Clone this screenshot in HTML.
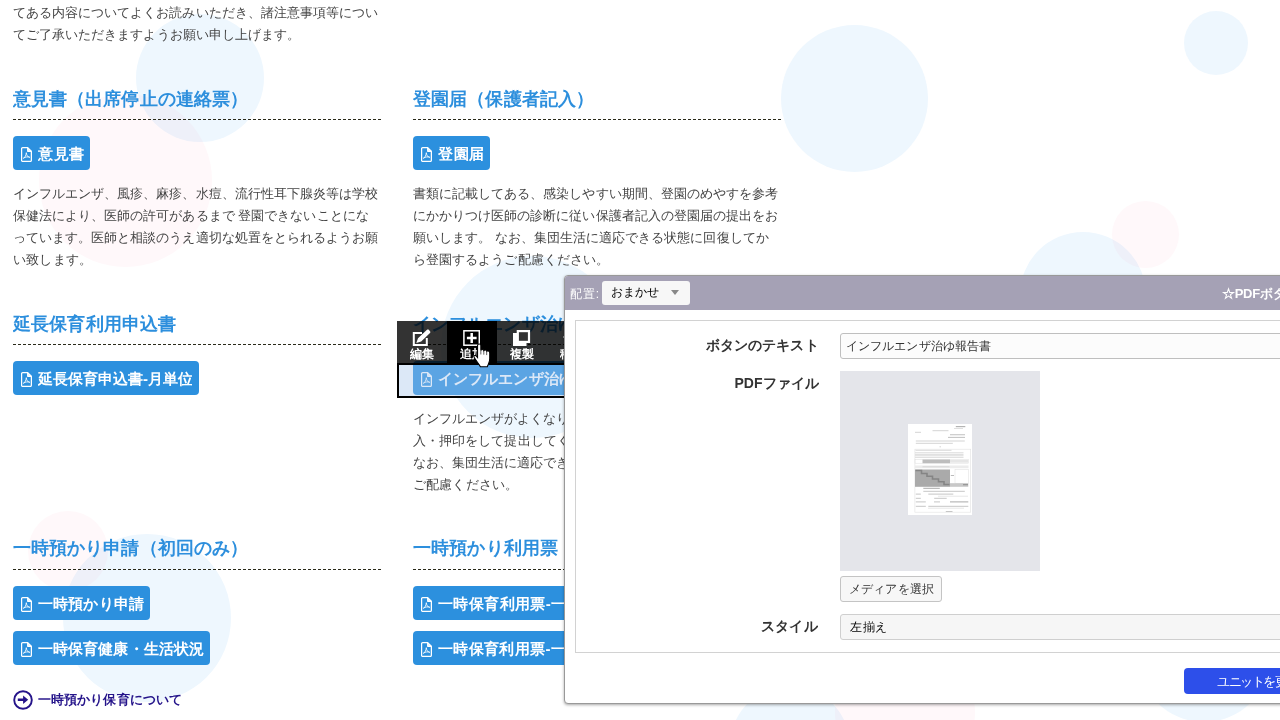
<!DOCTYPE html>
<html lang="ja">
<head>
<meta charset="utf-8">
<title>PDF</title>
<style>
*{box-sizing:border-box;margin:0;padding:0}
html,body{width:1280px;height:720px;overflow:hidden;background:#fff}
body{position:relative;font-family:"Liberation Sans",sans-serif;color:#444}
div,span{white-space:nowrap}
.c{position:absolute;border-radius:50%}
.cb{background:#eef7fe}
.cp{background:#fff8fa}
.mix{mix-blend-mode:multiply}
.j{overflow:hidden;text-align:justify;text-align-last:justify;white-space:nowrap}
.l{position:absolute;height:22px;line-height:22px;font-size:13px;color:#444}
.h{position:absolute;height:26px;line-height:26px;font-size:18px;font-weight:bold;color:#2d8fdd}
.d{position:absolute;height:0;border-top:1px dashed #2a2a1a}
.b{position:absolute;height:34px;background:#2c90de;border-radius:4px;overflow:hidden}
.b span{position:absolute;left:25px;top:1px;height:34px;line-height:34px;font-size:15px;font-weight:bold;color:#fff}
.b svg{position:absolute;left:8px;top:11px}
#tb{position:absolute;left:397px;top:321px;width:300px;height:42px;background:rgba(0,0,0,.8)}
.ti{position:absolute;top:0;width:50px;height:42px}
.ti span{position:absolute;left:12.5px;width:24.5px;top:26px;height:14px;line-height:14px;font-size:12px;font-weight:bold;color:#fff;overflow:hidden;text-align:justify;text-align-last:justify}
.ti svg{position:absolute}
#unit{position:absolute;left:397px;top:363px;width:400px;height:35px;border:2px solid #000;background:rgba(166,197,235,.394)}
#dlg{position:absolute;left:564px;top:275px;width:760px;height:429px;background:#fff;border:1px solid #999;border-radius:4px;box-shadow:0 1px 3px rgba(0,0,0,.35);overflow:hidden}
#dh{position:absolute;left:0;top:0;width:760px;height:34px;background:#a5a1b5}
#dh .lb{position:absolute;left:5px;top:10px;height:16px;line-height:16px;font-size:12px;color:#fff;width:29px}
#sel{position:absolute;left:37px;top:5px;width:88px;height:24px;background:#f7f7f7;border-radius:3px}
#sel span{position:absolute;left:9px;top:3px;height:17px;line-height:17px;font-size:12px;color:#000;width:48px}
#sel i{position:absolute;left:69px;top:9px;width:0;height:0;border-left:4.5px solid transparent;border-right:4.5px solid transparent;border-top:5px solid #888}
#ttl{position:absolute;left:657px;top:9px;height:18px;line-height:18px;font-size:13px;font-weight:bold;letter-spacing:-.3px;color:#fff}
#box{position:absolute;left:10px;top:44px;width:760px;height:333px;border:1px solid #d2d2d2}
.fl{position:absolute;height:20px;line-height:20px;font-size:14px;font-weight:bold;color:#333}
.inp{position:absolute;border:1px solid #bfbfbf;border-radius:3px;font-size:12px;color:#333}
.inp span{position:absolute;top:0}
</style>
</head>
<body>
<div class="c cp" style="left:39px;top:94px;width:173px;height:173px"></div>
<div class="c cb mix" style="left:136px;top:14px;width:128px;height:128px"></div>
<div class="c cb" style="left:781px;top:25px;width:147px;height:147px"></div>
<div class="c cb" style="left:1184px;top:11px;width:64px;height:64px"></div>
<div class="c cp" style="left:1111.5px;top:201px;width:67px;height:67px"></div>
<div class="c cb mix" style="left:1020px;top:232px;width:126px;height:126px"></div>
<div class="c cb" style="left:441px;top:256px;width:182px;height:182px"></div>
<div class="c cp" style="left:28px;top:510.5px;width:80px;height:80px"></div>
<div class="c cb mix" style="left:63px;top:534px;width:168px;height:168px"></div>
<div class="c cp" style="left:835px;top:642px;width:140px;height:140px"></div>
<div class="c cb mix" style="left:730px;top:686px;width:120px;height:120px"></div>
<div class="c cb" style="left:1138px;top:590px;width:132px;height:132px"></div>
<div class="l j" style="left:13px;top:2px;width:365px">てある内容についてよくお読みいただき、諸注意事項等につい</div>
<div class="l j" style="left:13px;top:24px;width:287px">てご了承いただきますようお願い申し上げます。</div>
<div class="h j" style="left:13px;top:86px;width:235px">意見書（出席停止の連絡票）</div>
<div class="d" style="left:13px;top:119px;width:368px"></div>
<div class="b" style="left:13px;top:136px;width:77px"><svg width="11" height="15" viewBox="0 0 11 15" fill="none" stroke="#fff" stroke-width="1.25" stroke-linejoin="round"><path d="M1.6.65h5.100l3.650 3.650v9.100a1 1 0 0 1-1 1H1.600a1 1 0 0 1-1-1V1.650a1 1 0 0 1 1-1z"/><path d="M6.700.8v3.500h3.500" fill="#fff" fill-opacity=".85"/><path d="M2.400 11.800c1.500-1.300 2.700-3.500 2.900-6.100c.2 2.500 1.500 4.300 3.500 5M2.300 10.900c2-.9 4.300-1.200 6.500-.9" stroke-width=".85"/></svg><span class="j" style="width:46px">意見書</span></div>
<div class="l j" style="left:13px;top:183px;width:365px">インフルエンザ、風疹、麻疹、水痘、流行性耳下腺炎等は学校</div>
<div class="l j" style="left:13px;top:205px;width:355.64px">保健法により、医師の許可があるまで 登園できないことにな</div>
<div class="l j" style="left:13px;top:227px;width:365px">っています。医師と相談のうえ適切な処置をとられるようお願</div>
<div class="l j" style="left:13px;top:249px;width:79px">い致します。</div>
<div class="h j" style="left:13px;top:310.7px;width:163px">延長保育利用申込書</div>
<div class="d" style="left:13px;top:344px;width:368px"></div>
<div class="b" style="left:13px;top:361px;width:186px"><svg width="11" height="15" viewBox="0 0 11 15" fill="none" stroke="#fff" stroke-width="1.25" stroke-linejoin="round"><path d="M1.6.65h5.100l3.650 3.650v9.100a1 1 0 0 1-1 1H1.600a1 1 0 0 1-1-1V1.650a1 1 0 0 1 1-1z"/><path d="M6.700.8v3.500h3.500" fill="#fff" fill-opacity=".85"/><path d="M2.400 11.800c1.500-1.300 2.700-3.500 2.900-6.100c.2 2.500 1.500 4.300 3.500 5M2.300 10.900c2-.9 4.300-1.200 6.500-.9" stroke-width=".85"/></svg><span class="j" style="width:154px">延長保育申込書-月単位</span></div>
<div class="h j" style="left:13px;top:535.3px;width:235px">一時預かり申請（初回のみ）</div>
<div class="d" style="left:13px;top:569px;width:368px"></div>
<div class="b" style="left:13px;top:586px;width:137px"><svg width="11" height="15" viewBox="0 0 11 15" fill="none" stroke="#fff" stroke-width="1.25" stroke-linejoin="round"><path d="M1.6.65h5.100l3.650 3.650v9.100a1 1 0 0 1-1 1H1.600a1 1 0 0 1-1-1V1.650a1 1 0 0 1 1-1z"/><path d="M6.700.8v3.500h3.500" fill="#fff" fill-opacity=".85"/><path d="M2.400 11.800c1.500-1.300 2.700-3.500 2.900-6.100c.2 2.500 1.500 4.300 3.500 5M2.300 10.900c2-.9 4.300-1.200 6.500-.9" stroke-width=".85"/></svg><span class="j" style="width:106px">一時預かり申請</span></div>
<div class="b" style="left:13px;top:631px;width:197px"><svg width="11" height="15" viewBox="0 0 11 15" fill="none" stroke="#fff" stroke-width="1.25" stroke-linejoin="round"><path d="M1.6.65h5.100l3.650 3.650v9.100a1 1 0 0 1-1 1H1.600a1 1 0 0 1-1-1V1.650a1 1 0 0 1 1-1z"/><path d="M6.700.8v3.500h3.500" fill="#fff" fill-opacity=".85"/><path d="M2.400 11.800c1.500-1.300 2.700-3.500 2.900-6.100c.2 2.500 1.500 4.300 3.500 5M2.300 10.900c2-.9 4.300-1.200 6.500-.9" stroke-width=".85"/></svg><span class="j" style="width:166px">一時保育健康・生活状況</span></div>
<svg style="position:absolute;left:13px;top:690px" width="20" height="20" viewBox="0 0 20 20"><circle cx="10" cy="10" r="8.800" fill="none" stroke="#25148a" stroke-width="1.900"/><path d="M4.800 8.400h5.300V5.500L15.200 9.700 10.100 13.900V11H4.800z" fill="#25148a"/></svg>
<div class="l j" style="left:38px;top:688.5px;width:144px;font-weight:bold;color:#25148a">一時預かり保育について</div>
<div class="h j" style="left:413px;top:86px;width:181px">登園届（保護者記入）</div>
<div class="d" style="left:413px;top:119px;width:368px"></div>
<div class="b" style="left:413px;top:136px;width:77px"><svg width="11" height="15" viewBox="0 0 11 15" fill="none" stroke="#fff" stroke-width="1.25" stroke-linejoin="round"><path d="M1.6.65h5.100l3.650 3.650v9.100a1 1 0 0 1-1 1H1.600a1 1 0 0 1-1-1V1.650a1 1 0 0 1 1-1z"/><path d="M6.700.8v3.500h3.500" fill="#fff" fill-opacity=".85"/><path d="M2.400 11.800c1.500-1.300 2.700-3.500 2.900-6.100c.2 2.500 1.500 4.300 3.500 5M2.300 10.900c2-.9 4.300-1.200 6.500-.9" stroke-width=".85"/></svg><span class="j" style="width:46px">登園届</span></div>
<div class="l j" style="left:413px;top:183px;width:365px">書類に記載してある、感染しやすい期間、登園のめやすを参考</div>
<div class="l j" style="left:413px;top:205px;width:365px">にかかりつけ医師の診断に従い保護者記入の登園届の提出をお</div>
<div class="l j" style="left:413px;top:227px;width:355.64px">願いします。 なお、集団生活に適応できる状態に回復してか</div>
<div class="l j" style="left:413px;top:249px;width:196px">ら登園するようご配慮ください。</div>
<div class="h j" style="left:413px;top:310.7px;width:217px">インフルエンザ治ゆ報告書</div>
<div class="d" style="left:413px;top:344px;width:368px"></div>
<div class="b" style="left:413px;top:361px;width:210px"><svg width="11" height="15" viewBox="0 0 11 15" fill="none" stroke="#fff" stroke-width="1.25" stroke-linejoin="round"><path d="M1.6.65h5.100l3.650 3.650v9.100a1 1 0 0 1-1 1H1.600a1 1 0 0 1-1-1V1.650a1 1 0 0 1 1-1z"/><path d="M6.700.8v3.500h3.500" fill="#fff" fill-opacity=".85"/><path d="M2.400 11.800c1.500-1.300 2.700-3.500 2.900-6.100c.2 2.500 1.500 4.300 3.500 5M2.300 10.900c2-.9 4.300-1.200 6.500-.9" stroke-width=".85"/></svg><span class="j" style="width:181px">インフルエンザ治ゆ報告書</span></div>
<div class="l j" style="left:413px;top:408px;width:339px">インフルエンザがよくなりましたら、医師の診断に従い記</div>
<div class="l j" style="left:413px;top:430px;width:209px">入・押印をして提出してください。</div>
<div class="l j" style="left:413px;top:452px;width:365px">なお、集団生活に適応できる状態に回復してから登園するよう</div>
<div class="l j" style="left:413px;top:474px;width:105px">ご配慮ください。</div>
<div class="h j" style="left:413px;top:535.3px;width:145px">一時預かり利用票</div>
<div class="d" style="left:413px;top:569px;width:368px"></div>
<div class="b" style="left:413px;top:586px;width:230px"><svg width="11" height="15" viewBox="0 0 11 15" fill="none" stroke="#fff" stroke-width="1.25" stroke-linejoin="round"><path d="M1.6.65h5.100l3.650 3.650v9.100a1 1 0 0 1-1 1H1.600a1 1 0 0 1-1-1V1.650a1 1 0 0 1 1-1z"/><path d="M6.700.8v3.500h3.500" fill="#fff" fill-opacity=".85"/><path d="M2.400 11.800c1.500-1.300 2.700-3.500 2.900-6.100c.2 2.500 1.500 4.300 3.500 5M2.300 10.900c2-.9 4.300-1.200 6.500-.9" stroke-width=".85"/></svg><span class="j" style="width:143.5px">一時保育利用票-一日</span></div>
<div class="b" style="left:413px;top:631px;width:230px"><svg width="11" height="15" viewBox="0 0 11 15" fill="none" stroke="#fff" stroke-width="1.25" stroke-linejoin="round"><path d="M1.6.65h5.100l3.650 3.650v9.100a1 1 0 0 1-1 1H1.600a1 1 0 0 1-1-1V1.650a1 1 0 0 1 1-1z"/><path d="M6.700.8v3.500h3.500" fill="#fff" fill-opacity=".85"/><path d="M2.400 11.800c1.500-1.300 2.700-3.500 2.900-6.100c.2 2.500 1.500 4.300 3.500 5M2.300 10.900c2-.9 4.300-1.200 6.500-.9" stroke-width=".85"/></svg><span class="j" style="width:158.5px">一時保育利用票-一時間</span></div>
<div id="unit"></div>
<div id="tb"><div class="ti" style="left:0"><svg style="left:15px;top:8px" width="20" height="18" viewBox="0 0 20 18"><path d="M10 4H1.800v12h13V9" fill="none" stroke="#fff" stroke-width="2"/><path d="M4.300 14l1.700-4.800L15 .8c.5-.5 1.300-.5 1.800 0l1.200 1.400c.5.500.5 1.200 0 1.700L9.200 12.500z" fill="#fff"/></svg><span>編集</span></div><div class="ti" style="left:50px;background:#000"><svg style="left:16px;top:9px" width="17" height="16" viewBox="0 0 17 16"><rect x=".9" y=".8" width="15.400" height="14.400" fill="none" stroke="#fff" stroke-width="1.500"/><path d="M8.700 3.100v9.800M3.900 8h9.700" stroke="#fff" stroke-width="2.500"/></svg><span>追加</span></div><div class="ti" style="left:100px"><svg style="left:16px;top:9px" width="18" height="16" viewBox="0 0 18 16"><rect x="0" y="3" width="13.500" height="13" fill="#fff"/><rect x="4.800" y="1.100" width="11.200" height="10.800" fill="#333" stroke="#fff" stroke-width="2.200"/></svg><span>複製</span></div><div class="ti" style="left:150px"><svg style="left:16px;top:8px" width="16" height="16" viewBox="0 0 16 16"><path d="M8 0l3 3.500H9v3.500h3.500V5L16 8l-3.500 3V9H9v3.500h2L8 16l-3-3.500h2V9H3.500v2L0 8l3.500-3v2H7V3.500H5z" fill="#fff"/></svg><span>移動</span></div></div>
<svg style="position:absolute;left:473px;top:343px" width="18" height="25" viewBox="0 0 17 24" preserveAspectRatio="none"><path d="M4.300 2.300C4.300.5 7.400.5 7.400 2.300V7.200C8 6 9.800 6 10.200 7.400C10.800 6.400 12.600 6.600 12.900 8C13.600 7.300 15.800 7.600 15.800 9.500V15C15.800 18.500 14.500 20 13.500 22.800H7C6 20.500 3.500 18 1.200 14C.3 12.400 1.800 11.200 3 12.500L4.300 14Z" fill="#fff" stroke="#000" stroke-width="1"/><path d="M10.200 7.400v3.800M12.900 8v3.600M7.400 7v4" stroke="#444" stroke-width=".8"/></svg>
<div id="dlg"><div id="dh"><span class="lb j">配置:</span><div id="sel"><span class="j">おまかせ</span><i></i></div><span id="ttl">☆PDFボタン</span></div><div id="box"></div><div class="fl j" style="left:141px;width:112.5px;top:59px">ボタンのテキスト</div><div class="fl j" style="left:169.5px;width:84px;top:97px">PDFファイル</div><div class="fl j" style="left:196px;width:56.5px;top:340px">スタイル</div><div class="inp" style="left:275px;top:57px;width:500px;height:26px;background:#fcfcfc"><span class="j" style="left:5px;height:24px;line-height:24px;width:145px">インフルエンザ治ゆ報告書</span></div><div style="position:absolute;left:275px;top:95px;width:200px;height:200px;background:#e4e5ea"></div><svg style="position:absolute;left:343px;top:148px" width="64" height="91" viewBox="0 0 64 91"><rect width="64" height="91" fill="#fff"/><g fill="#d4d4d4"><rect x="24.500" y="6.200" width="16" height="1"/><rect x="7" y="7.800" width="6" height="1"/><rect x="7.800" y="16.500" width="49" height="1"/><rect x="7.800" y="18.800" width="37" height="1"/><rect x="31.500" y="22.300" width="1.500" height="1"/><rect x="7.500" y="25.800" width="36" height=".9"/><rect x="7" y="28.400" width="48.500" height=".8"/><rect x="7" y="29.900" width="48.500" height=".8"/><rect x="7" y="31.400" width="48.500" height=".8"/><rect x="7" y="32.900" width="48.500" height=".8"/></g><rect x="47.800" y="2" width="9.500" height="1.200" fill="#b4b4b4"/><rect x="46" y="4" width="9" height=".8" fill="#d8d8d8"/><rect x="42" y="10.400" width="15" height=".8" fill="#b0b0b0"/><rect x="40" y="12.900" width="17" height=".8" fill="#b0b0b0"/><rect x="6.900" y="25.200" width="55.800" height="63" fill="none" stroke="#e2e2e2" stroke-width=".6"/><rect x="7" y="35.500" width="53.500" height="3.700" fill="none" stroke="#ddd" stroke-width=".5"/><rect x="14.500" y="35.500" width="27.500" height="3.700" fill="#bdbdbd"/><rect x="42" y="36" width="18" height="2.700" fill="#e6e6e6"/><rect x="7" y="41.500" width="53.500" height="2.700" fill="#ececec"/><rect x="14.500" y="42.300" width="27" height="1" fill="#d6d6d6"/><rect x="7" y="45.500" width="35" height="17.300" fill="#aaa"/><path d="M7.500 46.500h6v3h5.500v2.700h5.500v2.800h6v2.800h5.500v2.700h5.500" fill="none" stroke="#858585" stroke-width="1.600"/><rect x="47" y="45.700" width="13.300" height="13.500" fill="#fff" stroke="#dedede" stroke-width=".5"/><rect x="42.800" y="51" width="3.200" height="1" fill="#bbb"/><rect x="42" y="59.200" width="18.300" height="3.600" fill="#c8c8c8"/><rect x="55" y="60" width="5" height="1.300" fill="#999"/><g fill="#c6c6c6"><rect x="15.300" y="63.800" width="16.500" height="1" fill="#aaa"/><rect x="15.300" y="66.800" width="41.500" height="1"/><rect x="7.800" y="69.600" width="5" height="1"/><rect x="20.300" y="69.600" width="25" height="1"/><rect x="30" y="71.800" width="30" height=".7" fill="#ddd"/><rect x="7.800" y="73.800" width="5" height="1"/><rect x="26.200" y="73.800" width="12.500" height="1"/><rect x="7.800" y="77.400" width="10" height="1"/><rect x="26" y="77.400" width="6" height="1"/><rect x="42" y="77.400" width="18.300" height="1" fill="#aaa"/><rect x="7.800" y="81.800" width="10" height="1"/><rect x="20.300" y="81.800" width="40" height="1"/><rect x="20" y="83.800" width="36" height=".7" fill="#ddd"/><rect x="37.800" y="87" width="6.700" height="1"/></g></svg><div class="inp" style="left:275px;top:300px;width:102px;height:26px;background:#f7f7f7;border-color:#c4c4c4"><span class="j" style="left:8px;height:24px;line-height:24px;width:85px">メディアを選択</span></div><div class="inp" style="left:275px;top:338px;width:500px;height:26px;background:#f6f6f6;border-color:#cfcfcf"><span class="j" style="left:9px;height:24px;line-height:24px;width:37px;color:#000">左揃え</span></div><div style="position:absolute;left:619px;top:392px;width:200px;height:26px;background:#2d4fea;border-radius:4px"><span class="j" style="position:absolute;left:33px;top:0;width:81px;height:26px;line-height:27px;font-size:13px;letter-spacing:-1.5px;color:#fff">ユニットを更新</span></div></div>
</body>
</html>
